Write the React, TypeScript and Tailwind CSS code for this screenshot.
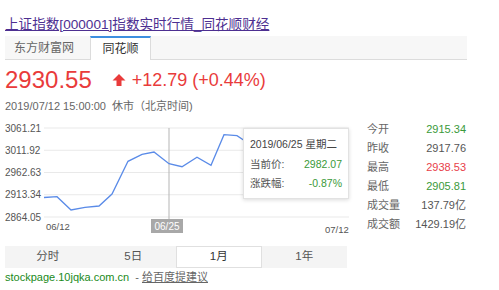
import React from "react";

const FONT = '"Liberation Sans", "Noto Sans CJK SC", sans-serif';

const yLabels = [
  { v: "3061.21", y: 128 },
  { v: "3011.92", y: 150.25 },
  { v: "2962.63", y: 172.5 },
  { v: "2913.34", y: 194.75 },
  { v: "2864.05", y: 217 },
];

const points: [number, number][] = [
  [44, 197.5],
  [57, 196.7],
  [71, 210],
  [85, 207.3],
  [99, 206],
  [112, 194],
  [128, 161.3],
  [142, 154.3],
  [154, 152],
  [169, 163.7],
  [182, 166.7],
  [197, 157.3],
  [211, 165.3],
  [224, 134.7],
  [237, 135.7],
  [245, 141],
];

const stats = [
  { k: "今开", v: "2915.34", c: "text-[#3a9a3a]" },
  { k: "昨收", v: "2917.76", c: "text-[#555]" },
  { k: "最高", v: "2938.53", c: "text-[#e8404a]" },
  { k: "最低", v: "2905.81", c: "text-[#3a9a3a]" },
  { k: "成交量", v: "137.79亿", c: "text-[#555]" },
  { k: "成交额", v: "1429.19亿", c: "text-[#555]" },
];

const periods = ["分时", "5日", "1月", "1年"];

export default function App() {
  return (
    <div
      className="w-[499px] h-[290px] bg-white pl-[5px] overflow-hidden"
      style={{ fontFamily: FONT }}
    >
      {/* Title */}
      <div className="h-[36px] pt-[12px]">
        <a className="text-[13.6px] leading-[18px] text-[#4d2f91] underline underline-offset-[1px]">
          上证指数[000001]指数实时行情_同花顺财经
        </a>
      </div>

      {/* Source tabs */}
      <div className="w-[462px] h-[24px] bg-[#f7f7f7] border-b border-[#dcdcdc] flex">
        <div className="w-[85px] pl-[9px] flex items-center text-[12px] text-[#666]">
          东方财富网
        </div>
        <div className="w-[61px] h-[24px] bg-white border-t-2 border-[#3d8fe0] border-x border-x-[#dcdcdc] flex items-center justify-center text-[12px] text-[#333]">
          同花顺
        </div>
      </div>

      {/* Price */}
      <div className="h-[39px] flex items-center text-[#e93b3b]">
        <span className="text-[24px] leading-none">2930.55</span>
        <svg width="14" height="14" viewBox="0 0 14 14" className="ml-[20px]">
          <path d="M7 1 L13.5 7.5 H9.5 V13 H4.5 V7.5 H0.5 Z" fill="#e93b3b" />
        </svg>
        <span className="ml-[6px] text-[18px] leading-none">+12.79 (+0.44%)</span>
      </div>

      {/* Date */}
      <div className="h-[14px] leading-[14px] text-[11px] text-[#666]">
        2019/07/12 15:00:00&nbsp; 休市（北京时间)
      </div>

      {/* Chart + stats */}
      <div className="flex h-[127px]">
        <div className="relative w-[345px] h-[127px]">
          <svg width="345" height="127" viewBox="5 113 345 127">
            {yLabels.map((l) => (
              <g key={l.v}>
                <line x1="44" x2="349" y1={l.y} y2={l.y} stroke="#e9e9e9" strokeWidth="1" />
                <text x="5" y={l.y + 3.5} fontSize="10" fill="#555" fontFamily={FONT}>
                  {l.v}
                </text>
              </g>
            ))}
            <line x1="169" x2="169" y1="128" y2="219" stroke="#b5b5b5" strokeWidth="1" />
            <polyline
              points={points.map((p) => p.join(",")).join(" ")}
              fill="none"
              stroke="#5a8be8"
              strokeWidth="1.3"
            />
            <text x="46" y="230" fontSize="9.5" fill="#555" fontFamily={FONT}>
              06/12
            </text>
            <text x="325" y="233" fontSize="9.5" fill="#555" fontFamily={FONT}>
              07/12
            </text>
            <rect x="151" y="219" width="32" height="14" fill="#a8a8a8" />
            <text x="167" y="229.5" fontSize="10" fill="#fff" textAnchor="middle" fontFamily={FONT}>
              06/25
            </text>
          </svg>

          {/* Tooltip */}
          <div className="absolute left-[238px] top-[15px] w-[106px] h-[71px] bg-white border border-[#e2e2e2] shadow-[0_1px_4px_rgba(0,0,0,0.15)] px-[6px] pt-[7px] text-[10.5px] text-[#555]">
            <div className="h-[16px] leading-[16px] text-[#444]">2019/06/25 星期二</div>
            <div className="mt-[3px] h-[19px] flex items-center justify-between">
              <span>当前价:</span>
              <span className="text-[#3a9a3a]">2982.07</span>
            </div>
            <div className="h-[19px] flex items-center justify-between">
              <span>涨跌幅:</span>
              <span className="text-[#3a9a3a]">-0.87%</span>
            </div>
          </div>
        </div>

        <div className="ml-[17px] w-[99px] pt-[7px] text-[11px]">
          {stats.map((s) => (
            <div key={s.k} className="h-[19px] flex items-center justify-between">
              <span className="text-[#666]">{s.k}</span>
              <span className={s.c}>{s.v}</span>
            </div>
          ))}
        </div>
      </div>

      {/* Periods */}
      <div className="mt-[6px] w-[342px] h-[22px] bg-[#f4f4f4] grid grid-cols-4">
        {periods.map((p) => (
          <div
            key={p}
            className={`flex items-center justify-center text-[11.5px] ${
              p === "1月" ? "bg-white border border-[#e0e0e0] text-[#333]" : "text-[#555]"
            }`}
          >
            {p}
          </div>
        ))}
      </div>

      {/* Footer */}
      <div className="h-[18px] leading-[18px] text-[11px]">
        <span className="text-[#1a8a1a]">stockpage.10jqka.com.cn</span>
        <span className="text-[#666]">&nbsp; - </span>
        <span className="text-[#666] underline">给百度提建议</span>
      </div>
    </div>
  );
}
